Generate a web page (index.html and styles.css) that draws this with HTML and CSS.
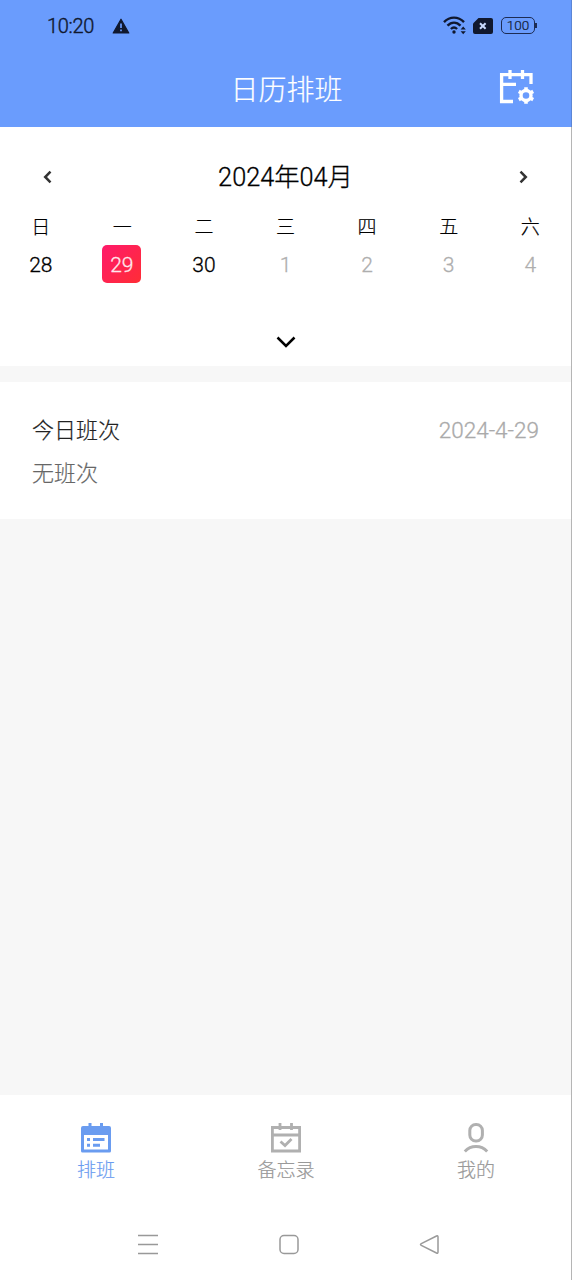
FILE: index.html
```html
<!DOCTYPE html>
<html lang="zh-CN">
<head>
<meta charset="utf-8">
<title>日历排班</title>
<link rel="stylesheet" href="styles.css">
</head>
<body>
<div class="screen">
  <header class="header">
    <div class="status">
      <span class="clock">10:20</span>
      <svg class="warn" width="18" height="16" viewBox="0 0 18 16"><path d="M9 1.2 16.8 15H1.2Z" fill="#10182e" stroke="#10182e" stroke-width="1.2" stroke-linejoin="round"/><path d="M9 5.5v4.6M9 11.6v1.7" stroke="#6a9cfd" stroke-width="1.7"/></svg>
      <svg class="wifi" width="24" height="19" viewBox="0 0 24 19" fill="none" stroke="#10182e" stroke-width="2.4"><path d="M1 6.1C6.8.1 15.2.1 21 6.1"/><path d="M4.500 9.600C8.400 5.600 13.600 5.600 17.500 9.600"/><path d="M7.900 13C9.800 11.200 12.200 11.200 14.100 13"/><circle cx="11" cy="16" r="1.700" fill="#10182e" stroke="none"/><path d="m17.600 13.600 2.600-3 2.600 3zM17.600 15.200l2.600 3 2.600-3z" fill="#10182e" stroke="none"/></svg>
      <svg class="sim" width="20" height="16" viewBox="0 0 20 16"><path d="M5.500 0H18a2 2 0 0 1 2 2v12a2 2 0 0 1-2 2H2a2 2 0 0 1-2-2V5.500Z" fill="#10182e"/><path d="m7 5.200 5.600 5.600M12.600 5.200 7 10.800" stroke="#c9dafd" stroke-width="2"/></svg>
      <span class="battery">100</span>
    </div>
    <div class="titlebar">
      <h1 class="title">日历排班</h1>
      <svg class="settings" width="36" height="36" viewBox="0 0 36 36" fill="none" stroke="#fff" stroke-width="3.300"><path d="M14 32.500H2.600V5.700H32v9.300M2.600 15.300H17M11 1v9M23.500 1v9"/><circle cx="27" cy="26.500" r="5" stroke-width="3.400"/><path d="M27 21.500v-3.300M27 31.500v3.300M22.700 24l-2.900-1.600M31.300 29l2.900 1.600M22.700 29l-2.900 1.600M31.300 24l2.900-1.600" stroke-width="3.600"/></svg>
    </div>
  </header>

  <section class="calendar">
    <div class="monthbar">
      <svg width="9" height="14" viewBox="0 0 9 14"><path d="M7.500 1.600 2.200 7l5.300 5.400" fill="none" stroke="#333" stroke-width="2.500"/></svg>
      <span class="month">2024年04月</span>
      <svg width="9" height="14" viewBox="0 0 9 14"><path d="M1.500 1.600 6.800 7l-5.300 5.400" fill="none" stroke="#333" stroke-width="2.500"/></svg>
    </div>
    <div class="week names"><span>日</span><span>一</span><span>二</span><span>三</span><span>四</span><span>五</span><span>六</span></div>
    <div class="week days"><span>28</span><span class="today">29</span><span>30</span><span class="next">1</span><span class="next">2</span><span class="next">3</span><span class="next">4</span></div>
    <svg class="expand" width="22" height="14" viewBox="0 0 22 14"><path d="m2.500 2.500 8.500 8.500 8.500-8.500" fill="none" stroke="#000" stroke-width="2.500"/></svg>
  </section>

  <section class="shift">
    <div class="shift-head"><span>今日班次</span><span class="date">2024-4-29</span></div>
    <div class="empty">无班次</div>
  </section>

  <nav class="tabs">
    <div class="tab active">
      <svg width="32" height="32" viewBox="0 0 32 32"><path d="M3 4h26a2 2 0 0 1 2 2v23a1.500 1.500 0 0 1-1.500 1.500h-27A1.500 1.500 0 0 1 1 29V6a2 2 0 0 1 2-2ZM4 13v14.500h24V13Z" fill="#6a9cf0" fill-rule="evenodd"/><path d="M10 1v6M21.500 1v6M7 17.500h3M13 17.500h11.500M7 23.300h3M13 23.300h7" stroke="#6a9cf0" stroke-width="3"/></svg>
      <span>排班</span>
    </div>
    <div class="tab">
      <svg width="32" height="32" viewBox="0 0 32 32" fill="none" stroke="#b0b0b0" stroke-width="2.800"><path d="M2.400 5.500h27.200V29H2.400ZM2 13h28M10 1v7M21.500 1v7M10.500 19.500l4.500 4 6.500-6.500"/></svg>
      <span>备忘录</span>
    </div>
    <div class="tab">
      <svg width="32" height="32" viewBox="0 0 32 32" fill="none" stroke="#b0b0b0" stroke-width="3"><rect x="9.800" y="2.500" width="12.600" height="16.500" rx="6"/><path d="M4.800 29.500C11 22.900 21 22.900 27.200 29.500"/></svg>
      <span>我的</span>
    </div>
  </nav>

  <div class="sysnav">
    <svg width="22" height="22" viewBox="0 0 22 22"><path d="M1 1.500h20M1 10.500h20M1 19.500h20" stroke="#999" stroke-width="1.500"/></svg>
    <svg width="22" height="22" viewBox="0 0 22 22"><rect x="2" y="1.500" width="18" height="18" rx="4" fill="none" stroke="#999" stroke-width="1.500"/></svg>
    <svg width="22" height="22" viewBox="0 0 22 22"><path d="M2.300 9.600 17.500 2q1.500-.6 1.500 1v15q0 1.600-1.500 1L2.300 11.400q-1.600-.9 0-1.800Z" fill="none" stroke="#999" stroke-width="1.500"/></svg>
  </div>
</div>
</body>
</html>
```
FILE: styles.css
```css
* { box-sizing: border-box; }
body {
  margin: 0;
  font-family: Roboto, "Noto Sans CJK SC", sans-serif;
  font-weight: 300;
  -webkit-text-stroke: 0.2px currentColor;
}
svg { display: block; flex: none; }
.screen {
  width: 572px;
  height: 1280px;
  display: flex;
  flex-direction: column;
  background: #f7f7f7;
  border-right: 1px solid #b5b5b5;
}
.header {
  height: 127px;
  background: #6a9cfd;
  box-shadow: 1px 0 #5c86d6;
}
.status {
  height: 50px;
  padding: 1px 36px 0 47px;
  display: flex;
  align-items: center;
  color: #10182e;
}
.clock { font-size: 20px; letter-spacing: -0.3px; -webkit-text-stroke-width: 0.4px; }
.warn { margin-left: 18px; }
.wifi { margin-left: auto; }
.sim { margin: 0 8px 0 6px; }
.battery {
  position: relative;
  width: 34px;
  height: 17px;
  border: 1.500px solid #1d2c54;
  border-radius: 5px;
  font-size: 13.500px;
  line-height: 15px;
  text-align: center;
}
.battery::after {
  content: "";
  position: absolute;
  right: -3px;
  top: 5px;
  width: 2px;
  height: 5px;
  background: #1d2c54;
}
.titlebar {
  height: 77px;
  display: grid;
  grid-template-columns: 1fr auto 1fr;
  align-items: center;
  padding: 4px 36px 0 38px;
  color: #fff;
}
.title {
  grid-column: 2;
  margin: 0;
  font-size: 28px;
  font-weight: 300;
  line-height: 40px;
}
.settings { justify-self: end; margin-bottom: 8px; }
.calendar {
  height: 239px;
  padding-top: 30px;
  background: #fff;
  display: flex;
  flex-direction: column;
}
.monthbar {
  height: 40px;
  padding: 0 43px;
  display: flex;
  align-items: center;
  justify-content: space-between;
}
.month { font-size: 25.300px; line-height: 36px; padding-top: 1px; -webkit-text-stroke-width: 0.3px; }
.week {
  display: grid;
  grid-template-columns: repeat(7, 1fr);
  justify-items: center;
  align-items: center;
}
.names { height: 46px; padding-top: 16px; font-size: 19px; line-height: 24px; }
.days { height: 42px; font-size: 21px; line-height: 38px; -webkit-text-stroke-width: 0.3px; }
.days span { padding-top: 1px; }
.today {
  width: 39px;
  height: 38px;
  margin-right: 1px;
  border-radius: 5px;
  background: linear-gradient(135deg, #ff1a6b, #ff2d35);
  color: #ffe8ee;
  text-align: center;
}
.next { color: #aeaeae; }
.expand { margin: 50px auto 0; }
.shift {
  height: 137px;
  margin-top: 16px;
  padding: 33px 32px 0 32px;
  background: #fff;
  font-size: 22px;
  line-height: 32px;
}
.shift-head { display: flex; justify-content: space-between; color: #222; }
.date { color: #aaa; font-size: 22.500px; line-height: 30px; -webkit-text-stroke-width: 0.3px; }
.empty { margin-top: 11px; color: #666; }
.tabs {
  height: 115px;
  margin-top: auto;
  padding: 27px 0 0 1px;
  display: grid;
  grid-template-columns: repeat(3, 1fr);
  background: #fff;
}
.tab {
  display: flex;
  flex-direction: column;
  gap: 3px;
  align-items: center;
  font-size: 19px;
  line-height: 28px;
  color: #999;
}
.active { color: #6a9cf0; }
.sysnav {
  height: 70px;
  padding: 0 130px 0 137px;
  display: flex;
  align-items: center;
  justify-content: space-between;
  background: #fff;
}
```
